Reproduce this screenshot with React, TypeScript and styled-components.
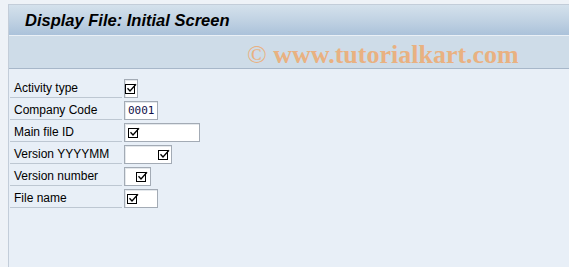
import React from 'react';
import styled, { createGlobalStyle } from 'styled-components';

const GlobalStyle = createGlobalStyle`
  html, body {
    margin: 0;
    padding: 0;
    background: #eef2f7;
  }
  body {
    font-family: "Liberation Sans", Arial, sans-serif;
  }
`;

const Page = styled.div`
  width: 569px;
  height: 267px;
  padding: 4px 0 0 8px;
  box-sizing: border-box;
  background: #eef2f7;
  overflow: hidden;
`;

const Panel = styled.div`
  height: 100%;
  display: flex;
  flex-direction: column;
  border-left: 1px solid #c3cdd9;
  border-top: 1px solid #c3cdd9;
  background: #e8eff7;
`;

const TitleBar = styled.div`
  height: 30px;
  display: flex;
  align-items: center;
  padding-left: 16px;
  background: linear-gradient(to bottom, #d4e1ec 0%, #c3d4e4 45%, #abc2da 100%);
  border-bottom: 1px solid #eaf0f6;
`;

const Title = styled.h1`
  margin: 0;
  font-family: "Liberation Sans", Arial, sans-serif;
  font-size: 16.5px;
  font-weight: bold;
  font-style: italic;
  color: #000;
  padding-top: 1px;
`;

const Toolbar = styled.div`
  height: 32px;
  display: flex;
  align-items: center;
  padding-left: 238px;
  background: #cedce8;
  border-bottom: 1px solid #a7b7c9;
`;

const Watermark = styled.span`
  font-family: "Liberation Serif", "Times New Roman", serif;
  font-size: 26px;
  font-weight: bold;
  color: #e9b181;
  white-space: nowrap;
  padding-top: 5px;
`;

const Copy = styled.span`
  font-weight: normal;
`;

const Content = styled.div`
  flex: 1;
  padding: 8px 0 0 1px;
  display: flex;
  flex-direction: column;
`;

const Row = styled.div`
  height: 22px;
  display: flex;
  align-items: flex-start;
`;

const Label = styled.div`
  width: 112px;
  height: 21px;
  border-bottom: 1px solid #bdc7d2;
  padding-left: 4px;
  box-sizing: border-box;
  margin-right: 2px;
  font-size: 12px;
  line-height: 22px;
  color: #000;
  white-space: nowrap;
`;

const Field = styled.div<{ $width: number; $align?: 'start' | 'end'; $pad?: number }>`
  margin-top: 2px;
  width: ${p => p.$width}px;
  height: 19px;
  box-sizing: border-box;
  background: #fff;
  border: 1px solid #a3abb5;
  box-shadow: inset 1px 1px 0 #e4e8ec;
  display: flex;
  align-items: center;
  justify-content: ${p => (p.$align === 'end' ? 'flex-end' : 'flex-start')};
  padding: 0 ${p => p.$pad ?? 2}px;
`;

const Value = styled.span`
  font-family: "DejaVu Sans Mono", "Liberation Mono", monospace;
  font-size: 11px;
  color: #10104a;
  padding-left: 1px;
`;

const Required = () => (
  <svg width="12" height="11" viewBox="0 0 12 11" style={{ display: 'block' }}>
    <rect x="0.5" y="1.5" width="9" height="9" fill="none" stroke="#000" strokeWidth="1" />
    <path d="M2.5 5.2 L5 8 L11 1.2" fill="none" stroke="#000" strokeWidth="1.3" />
  </svg>
);

const App: React.FC = () => (
  <>
    <GlobalStyle />
    <Page>
      <Panel>
        <TitleBar>
          <Title>Display File: Initial Screen</Title>
        </TitleBar>
        <Toolbar>
          <Watermark>
            <Copy>©</Copy> www.tutorialkart.com
          </Watermark>
        </Toolbar>
        <Content>
          <Row>
            <Label>Activity type</Label>
            <Field $width={14} $pad={0}>
              <Required />
            </Field>
          </Row>
          <Row>
            <Label>Company Code</Label>
            <Field $width={34}>
              <Value>0001</Value>
            </Field>
          </Row>
          <Row>
            <Label>Main file ID</Label>
            <Field $width={76} $pad={3}>
              <Required />
            </Field>
          </Row>
          <Row>
            <Label>Version YYYYMM</Label>
            <Field $width={48} $align="end" $pad={1}>
              <Required />
            </Field>
          </Row>
          <Row>
            <Label>Version number</Label>
            <Field $width={27} $align="end" $pad={2}>
              <Required />
            </Field>
          </Row>
          <Row>
            <Label>File name</Label>
            <Field $width={34} $pad={2}>
              <Required />
            </Field>
          </Row>
        </Content>
      </Panel>
    </Page>
  </>
);

export default App;
